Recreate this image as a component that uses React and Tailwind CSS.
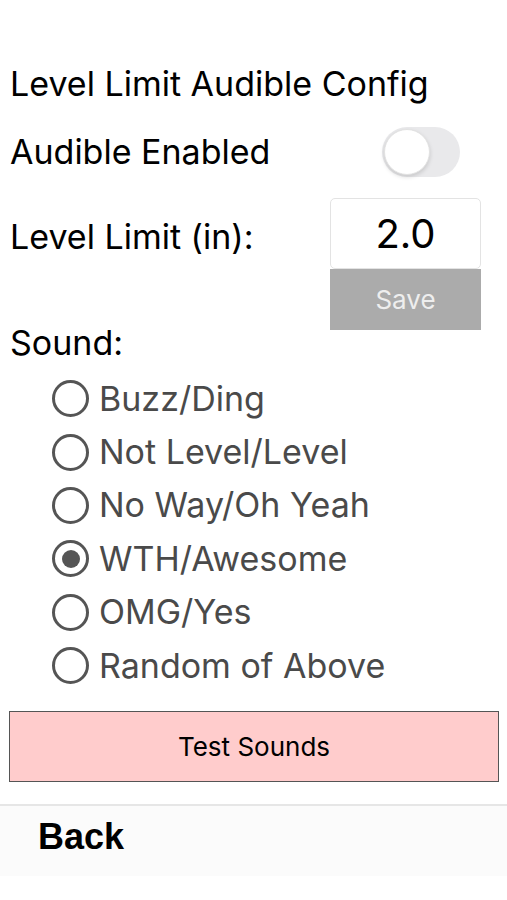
import React, { useState } from 'react';

const sounds = [
  'Buzz/Ding',
  'Not Level/Level',
  'No Way/Oh Yeah',
  'WTH/Awesome',
  'OMG/Yes',
  'Random of Above',
];

const Toggle = ({ on }) => (
  <div className="w-[78px] h-[50px] rounded-full bg-[#e9e9eb] p-[2px] flex items-center">
    <div className="w-[46px] h-[46px] rounded-full bg-white border border-[#e2e2e2] shadow-[0_2px_4px_rgba(0,0,0,0.15)]"></div>
  </div>
);

const Radio = ({ label, checked, onSelect }) => (
  <div className="h-[53.4px] flex items-center gap-[10px] cursor-pointer" onClick={onSelect}>
    <div className="w-[37px] h-[37px] rounded-full border-[3.5px] border-[#555555] flex items-center justify-center">
      {checked && <div className="w-[18px] h-[18px] rounded-full bg-[#555555]"></div>}
    </div>
    <span className="text-[34px] leading-none text-[#4a4a4a]">{label}</span>
  </div>
);

const App = () => {
  const [selected, setSelected] = useState(3);

  return (
    <div className="w-[507px] h-[900px] bg-white font-['Inter','Helvetica_Neue',sans-serif] text-black">
      <div className="pt-[64px] pl-[10px]">
        <div className="h-[40px] leading-[40px] text-[34px]">Level Limit Audible Config</div>

        <div className="mt-[23px] h-[50px] flex items-center justify-between pr-[47px]">
          <span className="text-[34px] leading-none">Audible Enabled</span>
          <Toggle on={false} />
        </div>

        <div className="mt-[21px] flex justify-between pr-[26px]">
          <div className="mt-[19px] h-[40px] leading-[40px] text-[34px]">Level Limit (in):</div>
          <div className="w-[151px] flex flex-col">
            <div className="h-[71px] rounded-[5px] border border-[#e3e3e3] bg-white flex items-center justify-center text-[40px]">
              2.0
            </div>
            <button className="h-[61px] bg-[#ababab] text-[#eeeeee] text-[26px]">Save</button>
          </div>
        </div>

        <div className="-mt-[2px] h-[30px] leading-[30px] text-[34px]">Sound:</div>

        <div className="mt-[14px] pl-[42px]">
          {sounds.map((s, i) => (
            <Radio key={s} label={s} checked={selected === i} onSelect={() => setSelected(i)} />
          ))}
        </div>
      </div>

      <div className="mt-[19px] px-[9px]">
        <button className="w-[490px] h-[71px] bg-[#ffcccc] border border-[#555555] text-[26px] text-black">
          Test Sounds
        </button>
      </div>

      <div className="mt-[22px] border-t-2 border-[#e6e6e6] h-[72px] bg-[#fbfbfb] flex items-center pl-[38px] pb-[8px]">
        <span className="font-['Liberation_Sans',Arial,sans-serif] font-bold text-[36px]">Back</span>
      </div>
    </div>
  );
};

export default App;
